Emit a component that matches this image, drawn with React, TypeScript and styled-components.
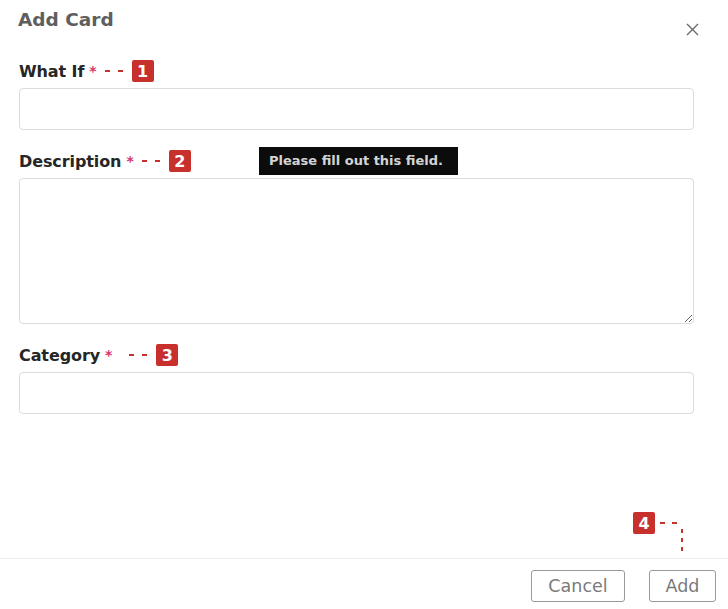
import * as React from 'react'
import styled, { createGlobalStyle } from 'styled-components'

const GlobalStyle = createGlobalStyle`
  html, body {
    margin: 0;
    padding: 0;
    background: #fff;
  }
  body {
    font-family: "DejaVu Sans", "Liberation Sans", sans-serif;
  }
`

const Dialog = styled.div`
  position: relative;
  width: 728px;
  height: 609px;
  display: flex;
  flex-direction: column;
  background: #fff;
  box-sizing: border-box;
`

const Header = styled.div`
  height: 60px;
  display: flex;
  justify-content: space-between;
  align-items: flex-start;
  padding: 6px 28px 0 18px;
  box-sizing: border-box;
`

const Title = styled.h2`
  margin: 0;
  font-size: 18.5px;
  line-height: 28px;
  font-weight: 700;
  color: #5e5e5e;
`

const CloseButton = styled.button`
  margin-top: 15px;
  width: 16px;
  height: 16px;
  padding: 0;
  border: none;
  background: none;
  cursor: pointer;
  color: #6b6b6b;
  display: flex;
  align-items: center;
  justify-content: center;
`

const Body = styled.div`
  flex: 1;
  display: flex;
  flex-direction: column;
  gap: 20px;
  padding: 0 34px 0 19px;
`

const Field = styled.div`
  display: flex;
  flex-direction: column;
  gap: 6px;
`

const LabelRow = styled.div`
  display: flex;
  align-items: center;
  height: 22px;
`

const Label = styled.label`
  font-size: 16px;
  font-weight: 700;
  color: #262626;
  letter-spacing: -0.1px;
`

const Required = styled.span`
  color: #d6336c;
  margin-left: 5px;
  font-size: 14px;
  font-weight: 700;
`

const Leader = styled.span<{ $lead: number }>`
  display: flex;
  gap: 8px;
  margin-left: ${p => p.$lead}px;
  margin-right: 9px;
`

const Dash = styled.span`
  width: 5px;
  height: 2px;
  background: #c8302c;
`

const Badge = styled.span`
  width: 22px;
  height: 22px;
  border-radius: 2px;
  background: #c8302c;
  color: #fff;
  font-size: 16px;
  font-weight: 700;
  display: flex;
  align-items: center;
  justify-content: center;
`

const TextInput = styled.input`
  height: 42px;
  box-sizing: border-box;
  border: 1px solid #dcdcdc;
  border-radius: 4px;
  padding: 0 12px;
  font-size: 14px;
  outline: none;
`

const TextArea = styled.textarea`
  height: 146px;
  box-sizing: border-box;
  border: 1px solid #dcdcdc;
  border-radius: 4px;
  padding: 8px 12px;
  font-size: 14px;
  outline: none;
  resize: vertical;
`

const Tooltip = styled.div`
  position: absolute;
  left: 259px;
  top: 147px;
  width: 199px;
  height: 28px;
  box-sizing: border-box;
  background: #0c0c0c;
  color: #d4d4d4;
  font-size: 13px;
  font-weight: 700;
  line-height: 28px;
  padding-left: 10px;
  white-space: nowrap;
`

const Callout = styled.div`
  position: absolute;
  left: 633px;
  top: 512px;
  display: flex;
  align-items: flex-start;
`

const CalloutLeader = styled.div`
  display: flex;
  gap: 7px;
  margin: 10px 0 0 5px;
`

const CalloutDrop = styled.div`
  margin: 17px 0 0 4px;
  width: 2px;
  height: 22px;
  background: repeating-linear-gradient(
    to bottom,
    #c8302c 0 4px,
    transparent 4px 9px
  );
`

const Footer = styled.div`
  height: 51px;
  border-top: 1px solid #ececec;
  display: flex;
  justify-content: flex-end;
  align-items: flex-start;
  gap: 24px;
  padding: 11px 12px 0 0;
  box-sizing: border-box;
`

const Button = styled.button<{ $width: number }>`
  width: ${p => p.$width}px;
  height: 32px;
  border: 1.5px solid #9a9a9a;
  border-radius: 3px;
  background: #fff;
  color: #7a7a7a;
  font-family: "DejaVu Sans", sans-serif;
  font-size: 17.5px;
  padding: 0;
  cursor: pointer;
`

const fields = [
  { id: 'whatIf', label: 'What If', num: 1, lead: 8, area: false },
  { id: 'description', label: 'Description', num: 2, lead: 8, area: true },
  { id: 'category', label: 'Category', num: 3, lead: 17, area: false }
]

const App = () => {
  return (
    <Dialog>
      <GlobalStyle />
      <Header>
        <Title>Add Card</Title>
        <CloseButton aria-label="close">
          <svg width="13" height="13" viewBox="0 0 13 13">
            <path d="M1 1 L12 12 M12 1 L1 12" stroke="currentColor" strokeWidth="1.4" />
          </svg>
        </CloseButton>
      </Header>
      <Body>
        {fields.map(f => (
          <Field key={f.id}>
            <LabelRow>
              <Label htmlFor={f.id}>{f.label}</Label>
              <Required>*</Required>
              <Leader $lead={f.lead}>
                <Dash />
                <Dash />
              </Leader>
              <Badge>{f.num}</Badge>
            </LabelRow>
            {f.area ? <TextArea id={f.id} /> : <TextInput id={f.id} type="text" />}
          </Field>
        ))}
      </Body>
      <Tooltip>Please fill out this field.</Tooltip>
      <Callout>
        <Badge>4</Badge>
        <CalloutLeader>
          <Dash />
          <Dash />
        </CalloutLeader>
        <CalloutDrop />
      </Callout>
      <Footer>
        <Button $width={94}>Cancel</Button>
        <Button $width={67}>Add</Button>
      </Footer>
    </Dialog>
  )
}

export default App
